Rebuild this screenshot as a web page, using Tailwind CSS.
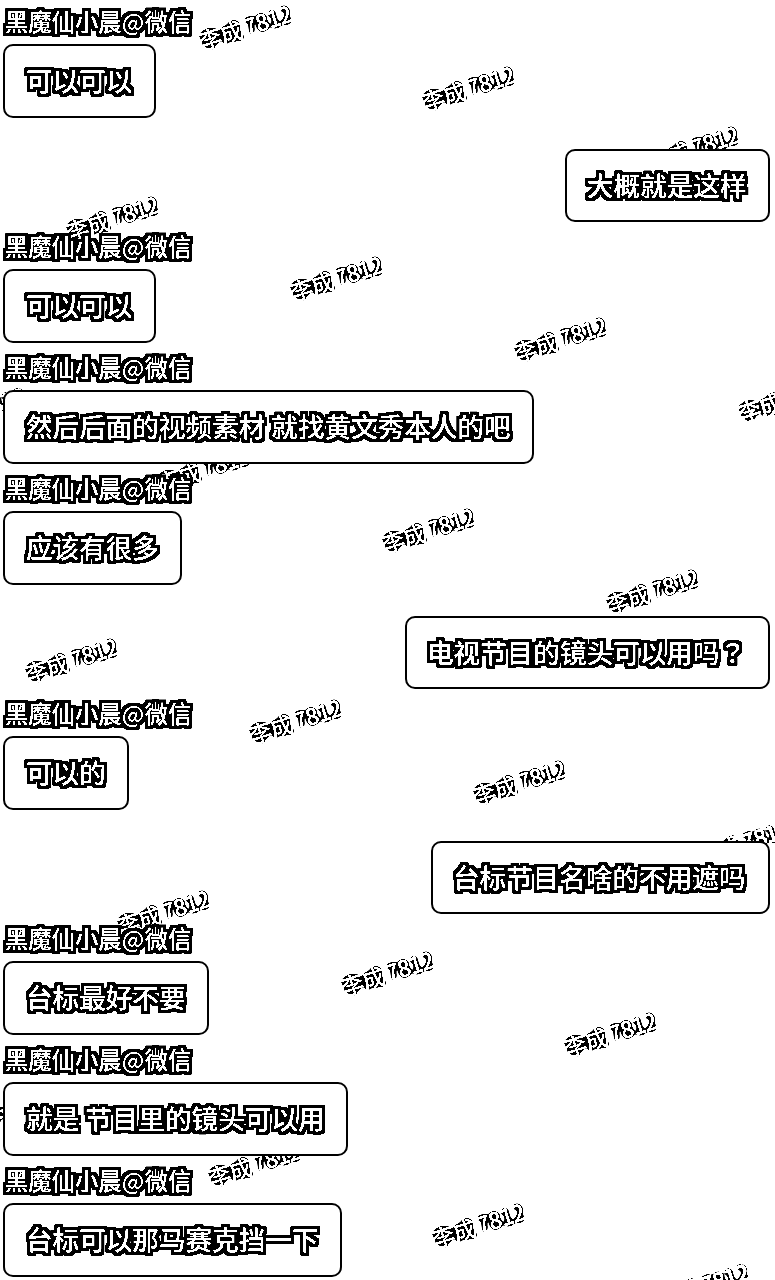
<!DOCTYPE html>
<html lang="zh-CN">
<head>
<meta charset="utf-8">
<title>聊天记录</title>
<script src="https://cdn.jsdelivr.net/npm/@tailwindcss/browser@4"></script>
</head>
<body class="bg-white text-white">
<svg class="absolute size-0" aria-hidden="true">
  <!-- Hard-edged white lettering with a square black outline -->
  <filter id="outline" x="-20" y="-10" width="800" height="80" filterUnits="userSpaceOnUse" color-interpolation-filters="sRGB">
    <feComponentTransfer in="SourceAlpha" result="ink"><feFuncA type="linear" slope="30" intercept="-12"/></feComponentTransfer>
    <feMorphology in="ink" operator="dilate" radius="3" result="fat"/>
    <feFlood flood-color="#fff"/><feComposite in2="ink" operator="in" result="face"/>
    <feMerge><feMergeNode in="fat"/><feMergeNode in="face"/></feMerge>
  </filter>
  <!-- Broken relief used by the watermark -->
  <filter id="relief" x="-10%" y="-10%" width="120%" height="120%" color-interpolation-filters="sRGB">
    <feGaussianBlur in="SourceAlpha" stdDeviation="2.8" result="soft"/>
    <feGaussianBlur in="SourceAlpha" stdDeviation="0.5" result="ink"/>
    <feComposite in="soft" in2="ink" operator="arithmetic" k2="1" k3="-0.9"/>
    <feComponentTransfer><feFuncA type="linear" slope="60" intercept="-10"/></feComponentTransfer>
  </filter>
</svg>
<div class="relative h-[1280px] w-[775px] overflow-hidden bg-white font-['Noto_Sans_CJK_SC',sans-serif]">
  <div id="marks" class="absolute inset-0 filter-[url(#relief)]"></div>
  <main id="chat" class="relative -mt-[3px] flex flex-col pr-[5px] pl-[3px]"></main>
</div>
<script>
const chat = [
  ['L','可以可以',153],['R','大概就是这样',205],['L','可以可以',153],
  ['L','然后后面的视频素材 就找黄文秀本人的吧',531],['L','应该有很多',179],
  ['R','电视节目的镜头可以用吗<span lang="zh-TW" class="font-[\'Noto_Sans_CJK_TC\',sans-serif]">？</span>',365],['L','可以的',126],['R','台标节目名啥的不用遮吗',339],
  ['L','台标最好不要',206],['L','就是 节目里的镜头可以用',345],['L','台标可以那马赛克挡一下',339]
];
document.getElementById('chat').innerHTML = chat.map(([side,text,w]) => side === 'L'
  ? `<div class="flex flex-col items-start"><div class="flex h-[47px] items-center pt-[2px] pl-[2px] text-[23.3px] leading-none font-medium whitespace-nowrap"><span class="block filter-[url(#outline)]">黑魔仙小晨<span class="inline-block w-[23.3px] text-center font-normal">@</span>微信</span></div>
     <div class="flex h-[74px] items-center rounded-[10px] border-2 border-black bg-white pb-[2px] pl-[21px] text-[26.6px] leading-none font-medium whitespace-nowrap" style="width:${w}px"><span class="block filter-[url(#outline)]">${text}</span></div></div>`
  : `<div class="mt-[31px] flex h-[73px] items-center self-end rounded-[10px] border-2 border-black bg-white pb-[1px] pl-[20px] text-[26.6px] leading-none font-medium whitespace-nowrap" style="width:${w}px"><span class="block filter-[url(#outline)]">${text}</span></div>`
).join('');
const marks = [[245,28],[468,89],[692,149],[112,219],[336,279],[560,340],[784,400],[-21,410],[203,470],[428,531],[652,592],[71,661],[295,722],[519,783],[743,843],[163,913],[387,974],[610,1035],[29,1104],[254,1165],[478,1226],[702,1286]];
document.getElementById('marks').innerHTML = marks.map(([x,y]) =>
  `<span class="absolute -translate-x-1/2 -translate-y-1/2 -rotate-18 text-[22px] leading-none [word-spacing:-2px] whitespace-nowrap" style="left:${x}px;top:${y-2}px">李成 7812</span>`).join('');
</script>
</body>
</html>
